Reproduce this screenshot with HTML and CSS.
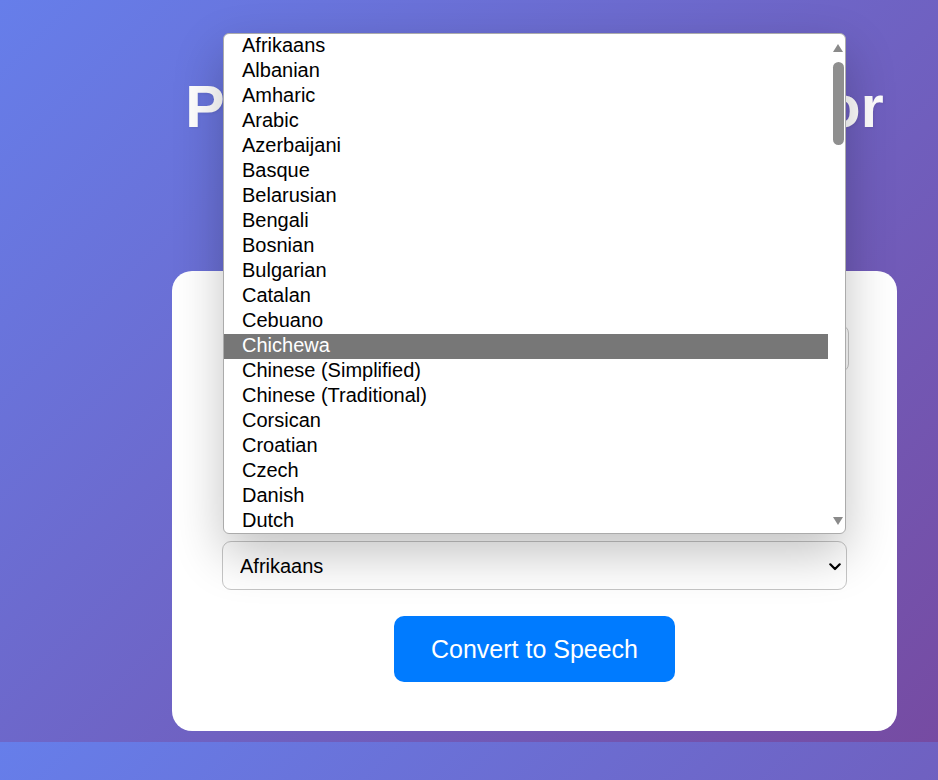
FILE: index.html
```html
<!DOCTYPE html>
<html lang="en">
<head>
<meta charset="utf-8">
<title>Pronunciation Translator</title>
<link rel="stylesheet" href="styles.css">
</head>
<body>
  <div class="container">
    <h1 class="title">Pronunciation Translator</h1>
    <div class="card">
      <input id="text" class="text-input" type="text" aria-label="Text to translate">
      <div class="controls">
        <div class="control-row"><input class="range" type="range" aria-label="Speed"></div>
        <div class="control-row"><input class="range" type="range" aria-label="Pitch"></div>
        <div class="control-row"><input class="range" type="range" aria-label="Volume"></div>
      </div>
      <div class="select-wrap">
        <select id="lang" class="lang-select" aria-label="Select language">
          <option>Afrikaans</option>
          <option>Albanian</option>
          <option>Amharic</option>
          <option>Arabic</option>
          <option>Azerbaijani</option>
          <option>Basque</option>
          <option>Belarusian</option>
          <option>Bengali</option>
          <option>Bosnian</option>
          <option>Bulgarian</option>
          <option>Catalan</option>
          <option>Cebuano</option>
          <option>Chichewa</option>
          <option>Chinese (Simplified)</option>
          <option>Chinese (Traditional)</option>
          <option>Corsican</option>
          <option>Croatian</option>
          <option>Czech</option>
          <option>Danish</option>
          <option>Dutch</option>
        </select>
        <svg class="chevron" width="12" height="8" viewBox="0 0 12 8" aria-hidden="true">
          <path d="M1.3 1.3 L6 6 L10.7 1.3" fill="none" stroke="#000" stroke-width="2.2" stroke-linecap="round" stroke-linejoin="round"/>
        </svg>
      </div>
      <button class="convert-btn" type="button">Convert to Speech</button>
    </div>
  </div>

  <div class="dropdown" role="listbox">
    <ul class="dropdown-list">
      <li class="option">Afrikaans</li>
      <li class="option">Albanian</li>
      <li class="option">Amharic</li>
      <li class="option">Arabic</li>
      <li class="option">Azerbaijani</li>
      <li class="option">Basque</li>
      <li class="option">Belarusian</li>
      <li class="option">Bengali</li>
      <li class="option">Bosnian</li>
      <li class="option">Bulgarian</li>
      <li class="option">Catalan</li>
      <li class="option">Cebuano</li>
      <li class="option is-active">Chichewa</li>
      <li class="option">Chinese (Simplified)</li>
      <li class="option">Chinese (Traditional)</li>
      <li class="option">Corsican</li>
      <li class="option">Croatian</li>
      <li class="option">Czech</li>
      <li class="option">Danish</li>
      <li class="option">Dutch</li>
    </ul>
    <div class="scrollbar">
      <span class="sb-arrow sb-up"></span>
      <span class="sb-thumb"></span>
      <span class="sb-space"></span>
      <span class="sb-arrow sb-down"></span>
    </div>
  </div>
</body>
</html>
```
FILE: styles.css
```css
html {
  margin: 0;
}

body {
  margin: 0;
  padding: 73px 0 11px;
  font-family: "Liberation Sans", Arial, sans-serif;
  background: linear-gradient(135deg, #667eea 0%, #764ba2 100%);
  color: #000;
}

.container {
  width: 725px;
  margin-left: 172px;
}

.title {
  margin: 0 0 130px;
  font-size: 59px;
  line-height: 68px;
  font-weight: bold;
  color: #fff;
  text-align: center;
  white-space: nowrap;
  text-shadow: 1px 1px 3px rgba(0, 0, 0, 0.08);
}

.card {
  box-sizing: border-box;
  height: 460px;
  padding: 54px 50px 49px;
  background: #fff;
  border-radius: 20px;
  display: flex;
  flex-direction: column;
}

.text-input {
  box-sizing: border-box;
  width: 626px;
  height: 47px;
  margin: 0 0 0 1px;
  padding: 0 16px;
  border: 1px solid #c8c8c8;
  border-radius: 8px;
  font-family: inherit;
  font-size: 20px;
}

.controls {
  margin-top: 20px;
  display: flex;
  flex-direction: column;
  gap: 16px;
}

.control-row {
  height: 24px;
  display: flex;
  align-items: center;
  padding-left: 40px;
}

.range {
  width: 400px;
  margin: 0;
}

.select-wrap {
  position: relative;
  height: 49px;
  margin-top: 45px;
}

.lang-select {
  appearance: none;
  -webkit-appearance: none;
  box-sizing: border-box;
  width: 100%;
  height: 49px;
  margin: 0;
  padding: 0 40px 0 17px;
  border: 1px solid #c6c6c6;
  border-radius: 9px;
  background: #fff;
  color: #000;
  font-family: inherit;
  font-size: 20px;
}

.chevron {
  position: absolute;
  right: 6px;
  top: 22px;
  pointer-events: none;
}

.convert-btn {
  align-self: center;
  margin-top: 26px;
  padding: 18px 37px;
  border: 0;
  border-radius: 10px;
  background: #007bff;
  color: #fff;
  font-family: inherit;
  font-size: 25px;
  line-height: 30px;
}

/* open native-like select popup */
.dropdown {
  position: absolute;
  top: 33px;
  left: 223px;
  box-sizing: border-box;
  width: 623px;
  height: 501px;
  display: flex;
  background: #fff;
  border: 1px solid #ababab;
  border-radius: 6px;
  overflow: hidden;
  box-shadow: 0 20px 50px rgba(0, 0, 0, 0.24);
  z-index: 10;
}

.dropdown-list {
  width: 604px;
  margin: 0;
  padding: 0;
  list-style: none;
  overflow: hidden;
}

.option {
  height: 25px;
  box-sizing: border-box;
  padding: 0 0 3px 18px;
  font-size: 20px;
  line-height: 22px;
  color: #000;
  white-space: nowrap;
}

.option.is-active {
  background: #777777;
  color: #fff;
}

.scrollbar {
  box-sizing: border-box;
  width: 17px;
  padding-left: 3px;
  display: flex;
  flex-direction: column;
  align-items: center;
}

.sb-arrow {
  width: 0;
  height: 0;
  border-left: 5px solid transparent;
  border-right: 5px solid transparent;
}

.sb-up {
  margin-top: 10px;
  border-bottom: 8px solid #8a8a8a;
}

.sb-down {
  margin-bottom: 8px;
  border-top: 8px solid #8a8a8a;
}

.sb-thumb {
  margin-top: 10px;
  width: 11px;
  height: 83px;
  border-radius: 6px;
  background: #8f8f8f;
}

.sb-space {
  flex: 1;
}
```
